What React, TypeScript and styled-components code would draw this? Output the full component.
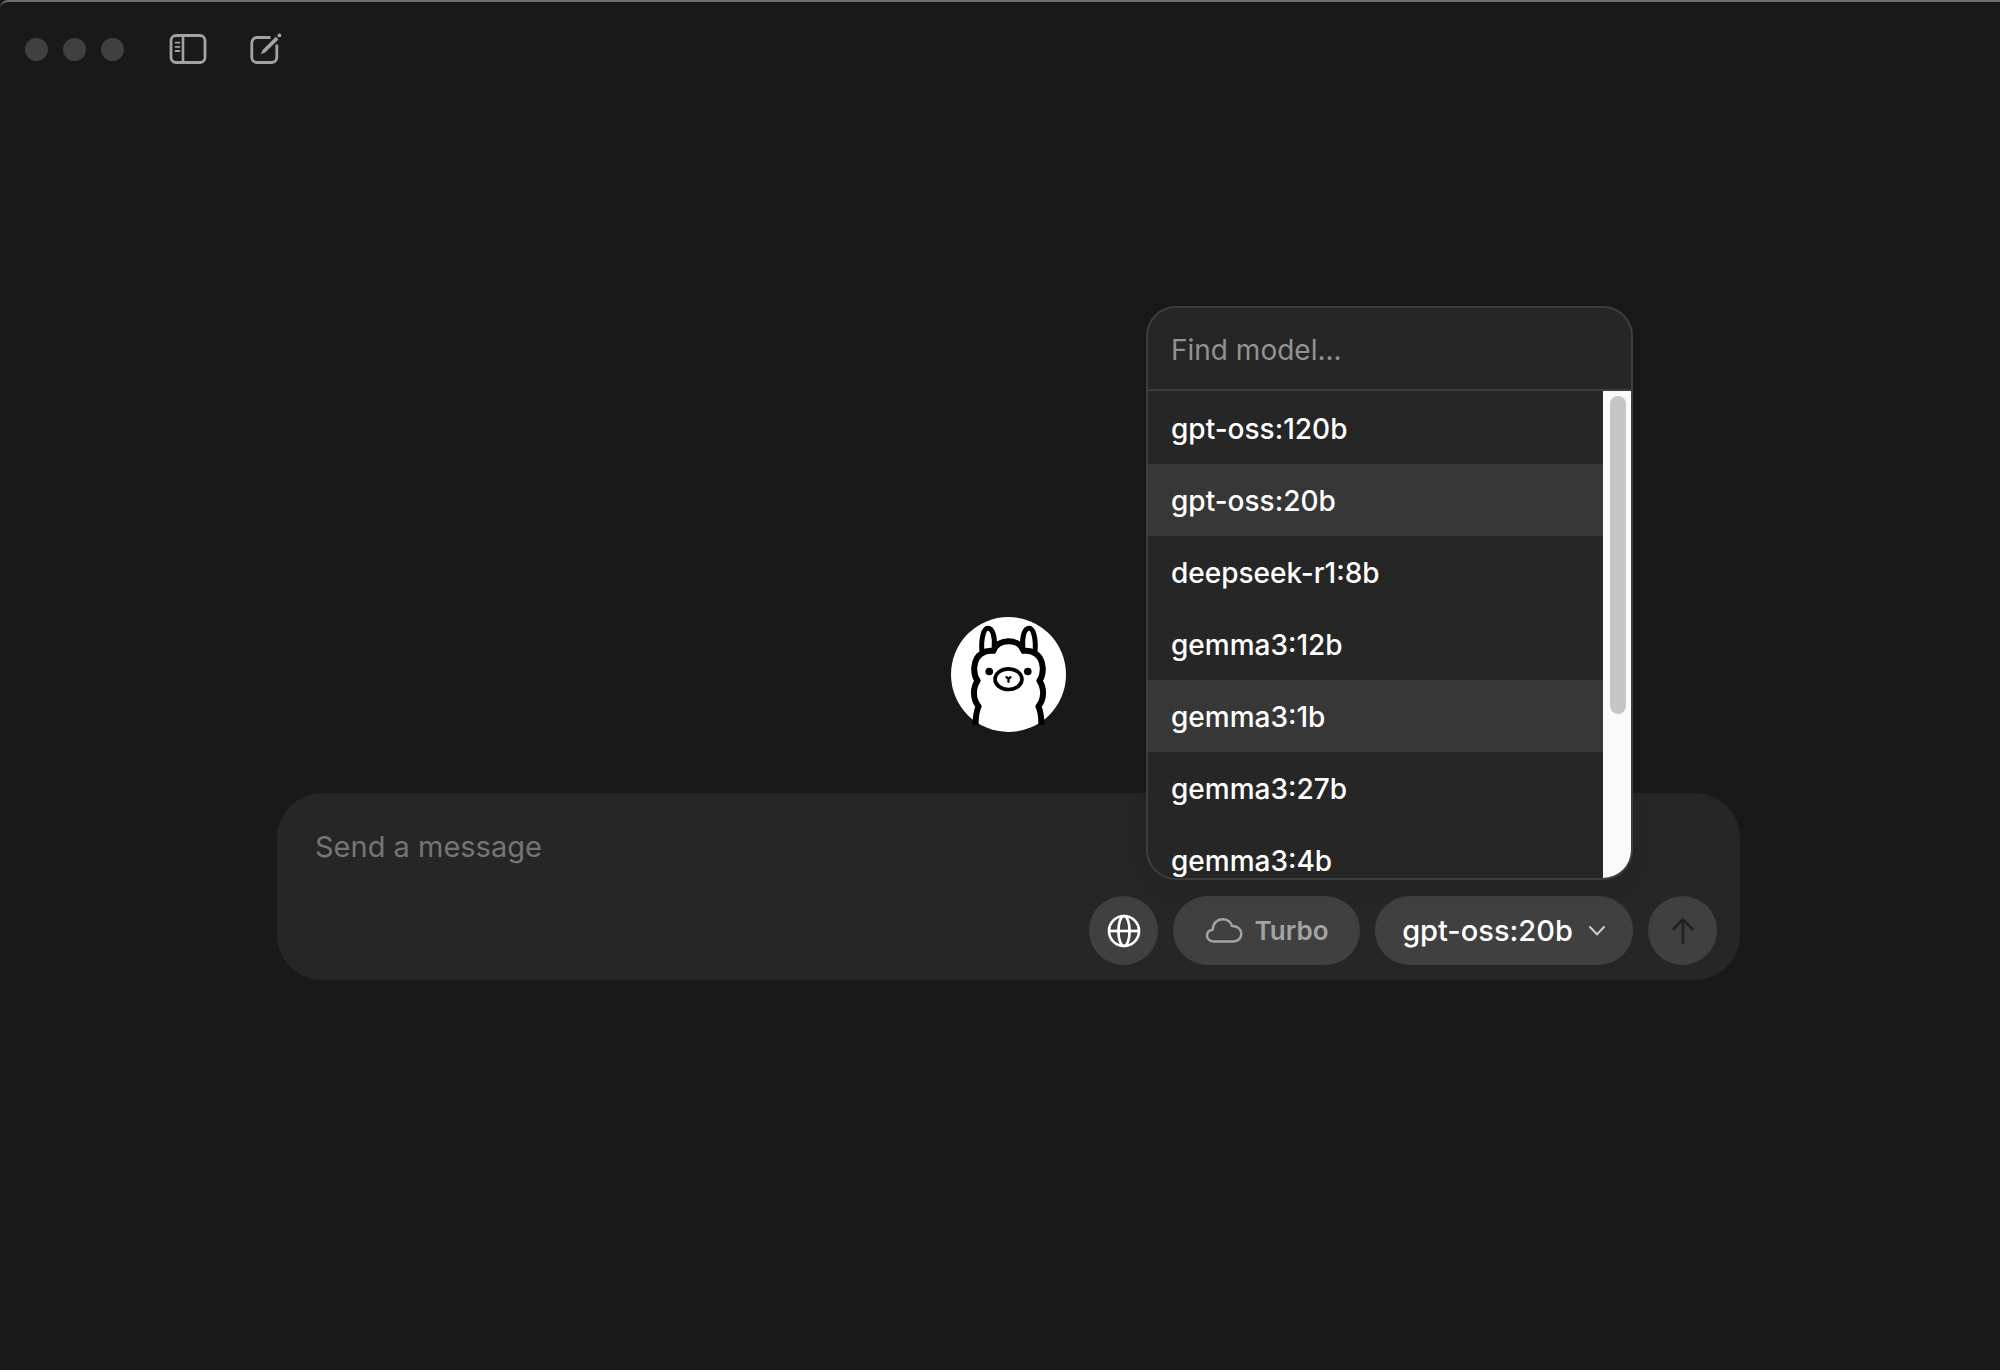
import React, { useState } from "react";
import styled, { createGlobalStyle } from "styled-components";

const color = {
  window: "#191919",
  surface: "#262626",
  control: "#404040",
  rowActive: "#373737",
  line: "#3d3d3d",
  icon: "#a3a3a3",
  hint: "#757575",
  text: "#ffffff",
};

const GlobalStyle = createGlobalStyle`
  * {
    box-sizing: border-box;
  }
  body {
    margin: 0;
    background: #15121c;
    font-family: Inter, "Liberation Sans", sans-serif;
  }
  button,
  input,
  textarea {
    font: inherit;
    margin: 0;
    border: 0;
    outline: 0;
  }
  button {
    padding: 0;
    cursor: pointer;
  }
  svg {
    display: block;
    flex: none;
  }
`;

const Window = styled.div`
  display: flex;
  flex-direction: column;
  min-height: 100vh;
  background: ${color.window};
  border-top: 2px solid #6c6c6c;
  border-top-left-radius: 8px;
`;

const TitleBar = styled.header`
  display: flex;
  align-items: center;
  height: 94px;
  padding: 0 25px;
`;

const WindowControls = styled.div`
  display: flex;
  gap: 15px;
  margin-right: 44px;
`;

const WindowDot = styled.button`
  width: 23px;
  height: 23px;
  border-radius: 50%;
  background: ${color.control};
`;

const Tools = styled.div`
  display: flex;
  gap: 38px;
`;

const ToolButton = styled.button`
  display: grid;
  place-items: center;
  width: 40px;
  height: 40px;
  background: transparent;
  color: ${color.icon};
`;

const Main = styled.main`
  flex: 1;
  display: flex;
  flex-direction: column;
  align-items: center;
  justify-content: center;
  gap: 61px;
  padding: 131px 260px 0 277px;
`;

const Composer = styled.form`
  width: 100%;
  border-radius: 45px;
  background: ${color.surface};
`;

const MessageBox = styled.textarea`
  display: block;
  width: 100%;
  height: 103px;
  padding: 34px 38px 0;
  resize: none;
  border-radius: 45px;
  background: transparent;
  color: ${color.text};
  font-size: 29px;
  line-height: 40px;
  overflow: hidden;

  &::placeholder {
    color: ${color.hint};
    opacity: 1;
  }
`;

const Actions = styled.div`
  display: flex;
  justify-content: flex-end;
  gap: 15px;
  padding: 0 23px 15px;
`;

const RoundButton = styled.button<{ $tone: string }>`
  display: grid;
  place-items: center;
  width: 69px;
  height: 69px;
  border-radius: 50%;
  background: ${color.control};
  color: ${(p) => p.$tone};
`;

const PillButton = styled.button`
  display: flex;
  align-items: center;
  justify-content: center;
  gap: 12px;
  height: 69px;
  border-radius: 35px;
  background: ${color.control};
  line-height: 40px;
`;

const TurboButton = styled(PillButton)`
  min-width: 187px;
  color: ${color.icon};
  font-size: 26px;
  font-weight: 600;
`;

const ModelButton = styled(PillButton)`
  gap: 15px;
  min-width: 258px;
  color: ${color.text};
  font-size: 29px;
  font-weight: 500;
`;

const PickerAnchor = styled.div`
  position: relative;
`;

const Menu = styled.div`
  position: absolute;
  right: 0;
  bottom: calc(100% + 16px);
  width: 487px;
  overflow: hidden;
  border: 2px solid ${color.line};
  border-radius: 30px;
  background: ${color.surface};
  box-shadow: 0 8px 24px rgba(0, 0, 0, 0.08);
`;

const SearchBox = styled.input`
  display: block;
  width: 100%;
  height: 83px;
  padding: 2px 23px 0;
  border-bottom: 2px solid ${color.line};
  background: transparent;
  color: ${color.text};
  font-size: 28px;

  &::placeholder {
    color: #929292;
    opacity: 1;
  }
`;

const MenuBody = styled.div`
  display: flex;
  height: 487px;
  overflow: hidden;
`;

const ModelList = styled.div`
  flex: 1;
  padding-top: 1px;
`;

const ModelOption = styled.button<{ $active: boolean }>`
  display: block;
  width: 100%;
  height: 72px;
  padding: 2px 23px 0;
  background: ${(p) => (p.$active ? color.rowActive : "transparent")};
  color: ${color.text};
  font-size: 28px;
  font-weight: 500;
  line-height: 40px;
  text-align: left;
`;

const ScrollTrack = styled.div`
  width: 28px;
  padding: 5px 5px 0 7px;
  background: #fafafa;
`;

const ScrollThumb = styled.div`
  width: 16px;
  height: 318px;
  border-radius: 8px;
  background: #c6c6c6;
`;

const SidebarIcon = () => (
  <svg width="38" height="30" viewBox="0 0 38 30" fill="none" stroke="currentColor">
    <rect x="2" y="1.5" width="34" height="27" rx="5" strokeWidth="2.8" />
    <path d="M14 1.5v27" strokeWidth="2.6" />
    <path d="M6.500 8.6h4M6.500 12.8h4M6.500 17h4" strokeWidth="1.8" strokeLinecap="round" />
  </svg>
);

const ComposeIcon = () => (
  <svg width="32" height="32" viewBox="0 0 32 32" fill="none" stroke="currentColor">
    <path
      d="M20.5 4.500H7A5.200 5.200 0 0 0 1.800 9.700v14.600A5.200 5.200 0 0 0 7 29.500h14.600a5.200 5.200 0 0 0 5.200-5.200V11.500"
      strokeWidth="2.8"
    />
    <path d="M10.800 21.200l1.800-4.200L25.800 3.800l2.600 2.600L15.200 19.400z" fill="currentColor" stroke="none" />
    <circle cx="29.400" cy="2.400" r="1.900" fill="currentColor" stroke="none" />
  </svg>
);

const GlobeIcon = () => (
  <svg width="34" height="34" viewBox="0 0 34 34" fill="none" stroke="currentColor" strokeWidth="2.7">
    <circle cx="17" cy="17" r="15" />
    <ellipse cx="17" cy="17" rx="5.6" ry="15" />
    <path d="M2 17h30" />
  </svg>
);

const CloudIcon = () => (
  <svg width="38" height="28" viewBox="0 0 38 28" fill="none" stroke="currentColor" strokeWidth="2.5" strokeLinejoin="round">
    <path d="M8.3 24.4C4.4 24.4 2 21.7 2 18.7c0-3.3 2.4-5.5 5.7-5.9C7.8 6.6 12 2.200 17.700 2.200c4.800 0 8 2.600 9.300 6.700 5.500 0 9.300 3.300 9.300 7.700 0 4.500-3.100 7.800-7.200 7.800z" />
  </svg>
);

const ChevronIcon = () => (
  <svg width="18" height="12" viewBox="0 0 18 12" fill="none" stroke="#cfcfcf" strokeWidth="2" strokeLinecap="round" strokeLinejoin="round">
    <path d="M2 2l7 7.400L16 2" />
  </svg>
);

const ArrowIcon = () => (
  <svg width="24" height="28" viewBox="0 0 24 28" fill="none" stroke="currentColor" strokeWidth="2.700" strokeLinecap="round" strokeLinejoin="round">
    <path d="M12 26V2.500M2.500 12L12 2.500 21.500 12" />
  </svg>
);

const LlamaLogo = () => (
  <svg width="115" height="115" viewBox="66 49 346 346" overflow="visible" fill="none" stroke="#000" strokeLinecap="butt" strokeLinejoin="round" role="img" aria-label="Ollama">
    <circle cx="239" cy="222" r="173" fill="#fff" stroke="none" />
    <g strokeWidth="18">
      <path d="M140 373C140 349 142 334 149 318C132 298 130 264 146 241C131 220 131 176 158 159C170 151 182 149 194 151C206 112 272 112 284 151C296 149 308 151 320 159C347 176 347 220 332 241C348 264 346 298 329 318C336 334 338 349 338 373" />
    </g>
    <g strokeWidth="15">
      <path d="M159 152C156 114 164 83 177 83C191 83 199 108 196 140" />
      <path d="M319 152C322 114 314 83 301 83C287 83 279 108 282 140" />
    </g>
    <ellipse cx="239" cy="236" rx="40.500" ry="31" strokeWidth="11" />
    <path d="M233 230l6 5 6-5M239 235v9" strokeWidth="7" strokeLinecap="round" />
    <circle cx="181" cy="213" r="11.500" fill="#000" stroke="none" />
    <circle cx="297" cy="213" r="11.500" fill="#000" stroke="none" />
  </svg>
);

const models = [
  "gpt-oss:120b",
  "gpt-oss:20b",
  "deepseek-r1:8b",
  "gemma3:12b",
  "gemma3:1b",
  "gemma3:27b",
  "gemma3:4b",
];

export default function App() {
  const [open, setOpen] = useState(true);
  const [selected, setSelected] = useState("gpt-oss:20b");
  const [hovered, setHovered] = useState("gemma3:1b");
  const [query, setQuery] = useState("");

  return (
    <>
      <GlobalStyle />
      <Window>
        <TitleBar>
          <WindowControls>
            <WindowDot aria-label="Close" />
            <WindowDot aria-label="Minimize" />
            <WindowDot aria-label="Zoom" />
          </WindowControls>
          <Tools>
            <ToolButton aria-label="Toggle sidebar">
              <SidebarIcon />
            </ToolButton>
            <ToolButton aria-label="New chat">
              <ComposeIcon />
            </ToolButton>
          </Tools>
        </TitleBar>
        <Main>
          <LlamaLogo />
          <Composer onSubmit={(e) => e.preventDefault()}>
            <MessageBox aria-label="Message" placeholder="Send a message" />
            <Actions>
              <RoundButton type="button" $tone={color.text} aria-label="Web search">
                <GlobeIcon />
              </RoundButton>
              <TurboButton type="button">
                <CloudIcon />
                Turbo
              </TurboButton>
              <PickerAnchor>
                <ModelButton
                  type="button"
                  aria-haspopup="listbox"
                  aria-expanded={open}
                  onClick={() => setOpen(!open)}
                >
                  {selected}
                  <ChevronIcon />
                </ModelButton>
                {open && (
                  <Menu>
                    <SearchBox
                      type="text"
                      aria-label="Find model"
                      placeholder="Find model..."
                      value={query}
                      onChange={(e) => setQuery(e.target.value)}
                    />
                    <MenuBody>
                      <ModelList role="listbox" aria-label="Models">
                        {models
                          .filter((name) => name.includes(query))
                          .map((name) => (
                            <ModelOption
                              key={name}
                              type="button"
                              role="option"
                              aria-selected={name === selected}
                              $active={name === selected || name === hovered}
                              onMouseEnter={() => setHovered(name)}
                              onClick={() => setSelected(name)}
                            >
                              {name}
                            </ModelOption>
                          ))}
                      </ModelList>
                      <ScrollTrack>
                        <ScrollThumb />
                      </ScrollTrack>
                    </MenuBody>
                  </Menu>
                )}
              </PickerAnchor>
              <RoundButton type="submit" $tone="#222222" aria-label="Send">
                <ArrowIcon />
              </RoundButton>
            </Actions>
          </Composer>
        </Main>
      </Window>
    </>
  );
}
